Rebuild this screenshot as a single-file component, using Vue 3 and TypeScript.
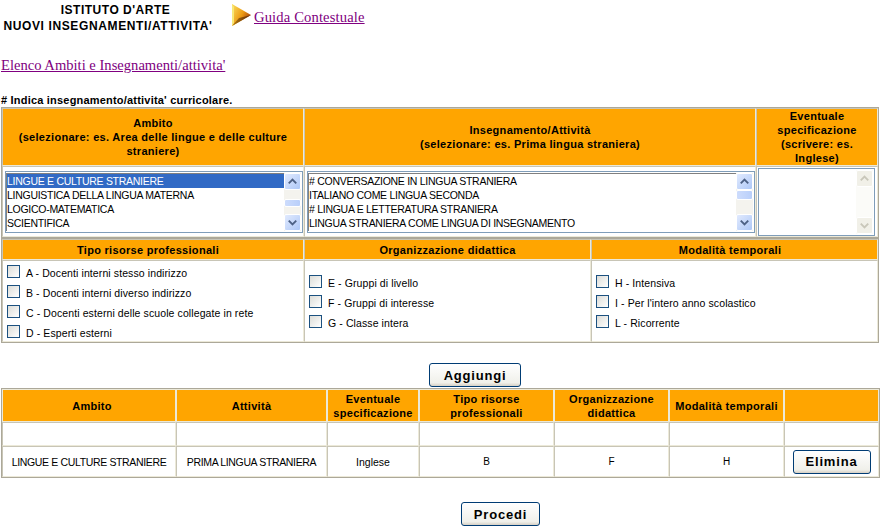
<template>
  <div class="page">
    <div class="top">
      <div class="title"><span class="line-one">ISTITUTO D'ARTE</span><br />NUOVI INSEGNAMENTI/ATTIVITA'</div>
      <svg class="arrow" viewBox="0 0 19 22">
        <defs>
          <linearGradient id="arrow-top" x1="0" y1="0" x2="1" y2="0.6">
            <stop offset="0" stop-color="#fbe060" />
            <stop offset="0.6" stop-color="#ec9a12" />
            <stop offset="1" stop-color="#a8400c" />
          </linearGradient>
          <linearGradient id="arrow-bottom" x1="0" y1="0" x2="1" y2="0">
            <stop offset="0" stop-color="#b07a10" />
            <stop offset="1" stop-color="#5e2806" />
          </linearGradient>
        </defs>
        <polygon points="0,0 19,11 0,22" fill="url(#arrow-top)" />
        <polygon points="0,22 19,11 7,14" fill="url(#arrow-bottom)" />
        <polygon points="0,0 2,3 2,19 0,22" fill="#f8e878" />
      </svg>
      <a class="link guida" href="#">Guida Contestuale</a>
    </div>
    <a class="link elenco" href="#">Elenco Ambiti e Insegnamenti/attivita'</a>
    <div class="note"># Indica insegnamento/attivita' curricolare.</div>

    <table class="grid form-a">
      <tbody>
        <tr>
          <th class="c1">Ambito<br />(selezionare: es. Area delle lingue e delle culture straniere)</th>
          <th class="c2">Insegnamento/Attività<br />(selezionare: es. Prima lingua straniera)</th>
          <th class="c3">Eventuale specificazione (scrivere: es. Inglese)</th>
        </tr>
        <tr>
          <td v-for="list in lists" :key="list.id" class="list-cell">
            <div class="listbox">
              <div class="items">
                <div v-for="(item, i) in list.items" :key="item" class="item" :class="{ selected: list.selected === i }">{{ item }}</div>
              </div>
              <div class="scrollbar">
                <span class="sb-btn"><svg viewBox="0 0 16 16"><path d="M4 10l4-4 4 4" /></svg></span>
                <div class="sb-track" :class="list.id"><span class="sb-thumb"></span></div>
                <span class="sb-btn"><svg viewBox="0 0 16 16"><path d="M4 6l4 4 4-4" /></svg></span>
              </div>
            </div>
          </td>
          <td class="text-cell">
            <div class="textbox">
              <div class="scrollbar off">
                <span class="sb-btn"><svg viewBox="0 0 16 16"><path d="M4 10l4-4 4 4" /></svg></span>
                <div class="sb-track"></div>
                <span class="sb-btn"><svg viewBox="0 0 16 16"><path d="M4 6l4 4 4-4" /></svg></span>
              </div>
            </div>
          </td>
        </tr>
      </tbody>
    </table>

    <table class="grid form-b">
      <tbody>
        <tr>
          <th v-for="g in groups" :key="g.title" :class="g.cls">{{ g.title }}</th>
        </tr>
        <tr>
          <td v-for="g in groups" :key="g.title" class="check-cell">
            <label v-for="o in g.options" :key="o" class="check">
              <input type="checkbox" />
              <span>{{ o }}</span>
            </label>
          </td>
        </tr>
      </tbody>
    </table>

    <div class="add-row"><button class="btn add">Aggiungi</button></div>

    <table class="grid summary">
      <tbody>
        <tr>
          <th v-for="h in summaryHeads" :key="h.label" :class="h.cls">{{ h.label }}</th>
        </tr>
        <tr class="empty">
          <td v-for="h in summaryHeads" :key="h.label"></td>
        </tr>
        <tr class="filled">
          <td class="caps">LINGUE E CULTURE STRANIERE</td>
          <td class="caps">PRIMA LINGUA STRANIERA</td>
          <td>Inglese</td>
          <td class="small">B</td>
          <td class="small">F</td>
          <td class="small">H</td>
          <td><button class="btn del">Elimina</button></td>
        </tr>
      </tbody>
    </table>

    <div class="next-row"><button class="btn next">Procedi</button></div>
  </div>
</template>

<script setup lang="ts">
const lists = [
  {
    id: 'ambito',
    selected: 0,
    items: ['LINGUE E CULTURE STRANIERE', 'LINGUISTICA DELLA LINGUA MATERNA', 'LOGICO-MATEMATICA', 'SCIENTIFICA'],
  },
  {
    id: 'insegnamento',
    selected: -1,
    items: ['# CONVERSAZIONE IN LINGUA STRANIERA', 'ITALIANO COME LINGUA SECONDA', '# LINGUA E LETTERATURA STRANIERA', 'LINGUA STRANIERA COME LINGUA DI INSEGNAMENTO'],
  },
]

const groups = [
  {
    title: 'Tipo risorse professionali',
    cls: 'g1',
    options: ['A - Docenti interni stesso indirizzo', 'B - Docenti interni diverso indirizzo', 'C - Docenti esterni delle scuole collegate in rete', 'D - Esperti esterni'],
  },
  {
    title: 'Organizzazione didattica',
    cls: 'g2',
    options: ['E - Gruppi di livello', 'F - Gruppi di interesse', 'G - Classe intera'],
  },
  {
    title: 'Modalità temporali',
    cls: 'g3',
    options: ['H - Intensiva', "I - Per l'intero anno scolastico", 'L - Ricorrente'],
  },
]

const summaryHeads = [
  { label: 'Ambito', cls: 's1' },
  { label: 'Attività', cls: 's2' },
  { label: 'Eventuale specificazione', cls: 's3' },
  { label: 'Tipo risorse professionali', cls: 's4' },
  { label: 'Organizzazione didattica', cls: 's5' },
  { label: 'Modalità temporali', cls: 's6' },
  { label: '', cls: 's7' },
]
</script>

<style scoped>
.page { width: 888px; height: 532px; overflow: hidden; font-family: "Liberation Sans", Arial, sans-serif; font-size: 11px; color: #000; background: #fff; }

.top { display: flex; align-items: flex-start; padding-top: 2px; height: 38px; }
.title { width: 216px; margin-right: 16px; text-align: center; font-size: 12px; line-height: 16px; font-weight: 700; letter-spacing: 0.62px; }
.line-one { display: inline-block; padding-left: 15px; letter-spacing: 0.5px; }
.arrow { width: 19px; height: 22px; margin-top: 2px; margin-right: 3px; }
.link { font-family: "Liberation Serif", "Times New Roman", serif; font-size: 14.6px; line-height: 18px; color: #800080; text-decoration: underline; }
.guida { margin-top: 6px; letter-spacing: 0.14px; }
.elenco { display: block; margin: 16px 0 0 1px; width: 300px; }

.note { margin: 20px 0 0 1px; font-weight: 700; font-size: 11px; line-height: 13px; letter-spacing: 0.2px; }

.grid { box-sizing: border-box; border-collapse: separate; border-spacing: 0; table-layout: fixed; margin-left: 1px; border: 1px solid #aca899; }
.grid th, .grid td { box-sizing: border-box; border: 1px solid; border-color: #c8c5b6 #ece9d8 #ece9d8 #c8c5b6; padding: 0; text-align: center; vertical-align: middle; }
.grid th { background: #ffa500; font-size: 11px; line-height: 14px; font-weight: 700; letter-spacing: 0.3px; }

.form-a { width: 878px; }
.form-a th { height: 58px; }
.form-a .c1 { width: 302px; padding: 0 8px; }
.form-a .c2 { width: 452px; padding: 0 8px; }
.form-a .c3 { width: 122px; padding: 0 6px; }

.list-cell, .text-cell { height: 71px; }
.listbox { display: flex; box-sizing: border-box; height: 62px; margin-left: 2px; border: 1px solid #7f9db9; padding: 1px 1px 1px 0; background: #fff; }
.items { flex: 1; min-width: 0; border-top: 1px solid #808080; border-left: 1px solid #808080; text-align: left; }
.item { font-size: 10.5px; line-height: 14px; letter-spacing: -0.28px; white-space: nowrap; overflow: hidden; }
.item.selected { background: #316ac5; color: #fff; }

.scrollbar { display: flex; flex-direction: column; width: 17px; flex: none; background: #f4f3ee; }
.sb-btn { display: block; height: 17px; box-sizing: border-box; border: 1px solid #fff; border-radius: 2px; background: linear-gradient(135deg, #e1eafe, #aec8f7); }
.sb-btn svg { display: block; width: 15px; height: 15px; }
.sb-btn path { fill: none; stroke: #4d6185; stroke-width: 2; }
.sb-track { flex: 1; position: relative; }
.sb-thumb { position: absolute; left: 0; right: 0; height: 8px; border: 1px solid #fff; border-radius: 2px; background: linear-gradient(90deg, #cddcfc, #b9cffa); box-sizing: border-box; }
.sb-track.ambito .sb-thumb { top: 9px; }
.sb-track.insegnamento .sb-thumb { top: 0; height: 10px; }
.scrollbar.off { background: #fbfbf8; }
.scrollbar.off .sb-btn { background: #f1f0e8; }
.scrollbar.off .sb-btn path { stroke: #c9c7ba; }

.textbox { display: flex; justify-content: flex-end; box-sizing: border-box; height: 68px; margin: 0 2px 0 1px; border: 1px solid #7f9db9; padding: 1px; background: #fff; }

.form-b { width: 878px; }
.form-b .g1 { width: 302px; padding-right: 10px; }
.form-b .g2 { width: 287px; }
.form-b .g3 { width: 287px; padding-right: 9px; }
.form-b th { height: 21px; }
.grid .check-cell { height: 82px; text-align: left; padding-left: 4px; }
.check { display: flex; align-items: center; height: 20px; }
.check input { appearance: none; width: 13px; height: 13px; margin: 0 6px 0 0; border: 1px solid #1c5180; border-radius: 0; background: linear-gradient(135deg, #dcdcd7, #fff); box-sizing: border-box; flex: none; }
.check span { padding-top: 4px; font-size: 10.5px; letter-spacing: 0.1px; }

.btn { display: block; box-sizing: border-box; height: 24px; padding: 0; font-family: "Liberation Sans", Arial, sans-serif; font-size: 13px; font-weight: 700; letter-spacing: 0.8px; color: #000; border: 1px solid #003c74; border-radius: 3px; background: linear-gradient(#fff, #f0f0ea 85%, #d6d0c5); }
.add-row { padding: 20px 0 1px 429px; }
.add { width: 92px; }
.next-row { padding: 24px 0 0 461px; }
.next { width: 79px; }
.del { width: 78px; margin: 0 auto; }

.summary { width: 879px; }
.grid.summary th { height: 33px; padding: 0 2px; border-color: #ece9d8; }
.grid.summary .s1 { width: 174px; padding-left: 8px; }
.s2 { width: 151px; }
.s3 { width: 92px; }
.s4 { width: 135px; }
.s5 { width: 115px; }
.s6 { width: 115px; }
.s7 { width: 95px; }
.empty td { height: 24px; }
.filled td { height: 31px; font-size: 10.5px; }
.filled td.caps { letter-spacing: -0.35px; }
.filled td.small { font-size: 10px; }
</style>

<style>
html, body { background: #fff; }
</style>
